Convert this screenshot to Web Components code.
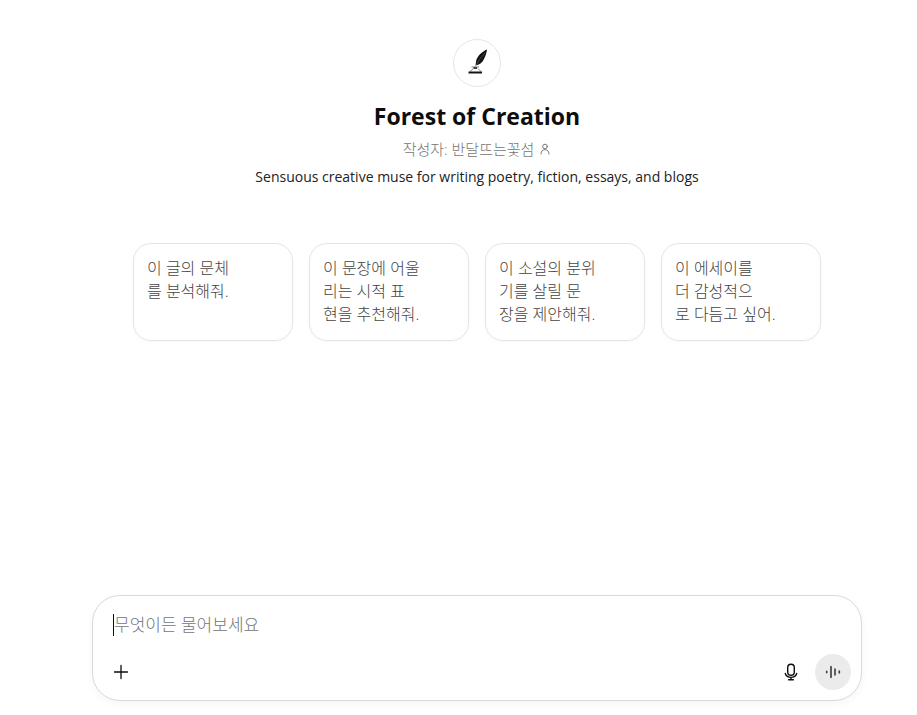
<!DOCTYPE html>
<html lang="ko">
<head>
<meta charset="utf-8">
<meta name="viewport" content="width=device-width, initial-scale=1">
<title>Forest of Creation</title>
<style>
    body {
        margin: 0;
        background: #fff;
        color: #0d0d0d;
        font-family: "Open Sans", "Noto Sans CJK KR", sans-serif;
    }
</style>
</head>
<body>

<chat-page>
    <gpt-profile slot="profile">
        <span slot="name">Forest of Creation</span>
        <span slot="author">작성자: 반달뜨는꽃섬</span>
        <span slot="description">Sensuous creative muse for writing poetry, fiction, essays, and blogs</span>
    </gpt-profile>
    <starter-card slot="starter">이 글의 문체<br>를 분석해줘.</starter-card>
    <starter-card slot="starter">이 문장에 어울<br>리는 시적 표<br>현을 추천해줘.</starter-card>
    <starter-card slot="starter">이 소설의 분위<br>기를 살릴 문<br>장을 제안해줘.</starter-card>
    <starter-card slot="starter">이 에세이를<br>더 감성적으<br>로 다듬고 싶어.</starter-card>
    <chat-composer slot="composer" placeholder="무엇이든 물어보세요"></chat-composer>
</chat-page>

<script>
class ChatPage extends HTMLElement {

    constructor(){
        super();
        this.attachShadow({mode: 'open'});
    }

    connectedCallback(){
        this.shadowRoot.innerHTML = `
        <style>
            :host{
                display: flex;
                flex-direction: column;
                box-sizing: border-box;
                min-height: 100vh;
                padding: 39px 55px 14px 92px;
            }

            main{
                display: flex;
                flex-direction: column;
                flex-grow: 1;
                width: 100%;
                max-width: 770px;
                margin: 0 auto;
            }

            #starters{
                display: grid;
                grid-template-columns: repeat(4, 1fr);
                gap: 16px;
                padding: 0 41px;
                margin: 54px 0 40px;
            }

            #composer{
                margin-top: auto;
            }
        </style>
        <main>
            <slot name="profile"></slot>
            <div id="starters"><slot name="starter"></slot></div>
            <div id="composer"><slot name="composer"></slot></div>
        </main>`;
    }
}
customElements.define('chat-page', ChatPage);

class GptProfile extends HTMLElement {

    constructor(){
        super();
        this.attachShadow({mode: 'open'});
    }

    connectedCallback(){
        this.shadowRoot.innerHTML = `
        <style>
            :host{
                display: flex;
                flex-direction: column;
                align-items: center;
                text-align: center;
            }

            #avatar{
                box-sizing: border-box;
                width: 48px;
                height: 48px;
                border: 1px solid #e6e6e6;
                border-radius: 50%;
            }

            #avatar svg{
                display: block;
            }

            h1{
                margin: 13px 0 0;
                font-size: 23px;
                line-height: 32px;
                font-weight: 700;
            }

            #author{
                display: flex;
                align-items: center;
                gap: 5px;
                margin-top: 5px;
                color: #757575;
                font-size: 15px;
                line-height: 24px;
                font-weight: 300;
            }

            p{
                margin: 4px 0 0;
                font-size: 14px;
                line-height: 24px;
                color: #222;
            }
        </style>
        <div id="avatar">
            <svg width="46" height="46" viewBox="0 0 46 46" aria-hidden="true">
                <path d="M33 9.500C28 11.500 23.500 16 22.200 20.500L21.500 25.500C25 25 28.500 22.500 30 19C31.500 16 32.600 13 33 9.500Z" fill="#141414"/>
                <path d="M31 13Q25 19 21 27" fill="none" stroke="#777" stroke-width=".5"/>
                <path d="M17.500 27h7.500M19.500 28.500l-3.500 3M24 28.500l3 3" fill="none" stroke="#666" stroke-width=".8"/>
                <path d="M19.500 27h3.500v2h-3.500z" fill="#444"/>
                <path d="M14.500 31.500h13.500v2h-13.500z" fill="#141414"/>
            </svg>
        </div>
        <h1><slot name="name"></slot></h1>
        <div id="author">
            <slot name="author"></slot>
            <svg width="12" height="12" viewBox="0 0 12 12" fill="none" stroke="#777" stroke-width="1" stroke-linecap="round" aria-hidden="true">
                <circle cx="6" cy="3.500" r="2.300"/>
                <path d="M2 11c0-2.800 1.600-4.300 4-4.300s4 1.500 4 4.300"/>
            </svg>
        </div>
        <p><slot name="description"></slot></p>`;
    }
}
customElements.define('gpt-profile', GptProfile);

class StarterCard extends HTMLElement {

    constructor(){
        super();
        this.attachShadow({mode: 'open'});
    }

    connectedCallback(){
        this.shadowRoot.innerHTML = `
        <style>
            :host{
                display: flex;
            }

            button{
                display: flex;
                flex-grow: 1;
                align-items: flex-start;
                padding: 13px 13px 14px;
                border: 1px solid #e5e5e5;
                border-radius: 18px;
                background: #fff;
                box-shadow: 0 1px 3px rgba(0, 0, 0, .03);
                color: #444;
                font: inherit;
                font-size: 16px;
                line-height: 23px;
                font-weight: 300;
                text-align: left;
                white-space: nowrap;
                cursor: pointer;
            }

            button:hover{
                background: #f9f9f9;
            }
        </style>
        <button type="button"><span><slot></slot></span></button>`;
    }
}
customElements.define('starter-card', StarterCard);

class ChatComposer extends HTMLElement {

    constructor(){
        super();
        this.attachShadow({mode: 'open'});
    }

    connectedCallback(){
        const placeholder = this.getAttribute('placeholder') || '';

        this.shadowRoot.innerHTML = `
        <style>
            :host{
                display: block;
            }

            form{
                padding: 10px;
                padding-top: 17px;
                border: 1px solid #d9d9d9;
                border-radius: 28px;
                background: #fff;
                box-shadow: 0 3px 8px rgba(0, 0, 0, .04);
            }

            #field{
                display: flex;
                align-items: center;
                height: 24px;
                padding: 0 10px;
            }

            #caret{
                width: 1px;
                height: 22px;
                background: #0d0d0d;
            }

            input{
                flex-grow: 1;
                min-width: 0;
                padding: 0;
                border: 0;
                outline: 0;
                background: none;
                color: #0d0d0d;
                font: inherit;
                font-size: 17px;
                line-height: 24px;
                font-weight: 300;
            }

            input::placeholder{
                color: #757575;
                opacity: 1;
            }

            #tools{
                display: flex;
                align-items: center;
                gap: 6px;
                margin-top: 17px;
            }

            button{
                display: grid;
                place-items: center;
                width: 36px;
                height: 36px;
                padding: 0;
                border: 0;
                border-radius: 50%;
                background: none;
                color: #0d0d0d;
                cursor: pointer;
            }

            #dictate{
                margin-left: auto;
            }

            #voice{
                background: #ebebeb;
            }
        </style>
        <form>
            <div id="field">
                <span id="caret"></span>
                <input type="text" aria-label="${placeholder}" placeholder="${placeholder}">
            </div>
            <div id="tools">
                <button type="button" aria-label="파일 추가">
                    <svg width="20" height="20" viewBox="0 0 20 20" fill="none" stroke="currentColor" stroke-width="1.300" stroke-linecap="round">
                        <path d="M10 3.500v13M3.500 10h13"/>
                    </svg>
                </button>
                <button type="button" id="dictate" aria-label="받아쓰기">
                    <svg width="20" height="20" viewBox="0 0 20 20" fill="none" stroke="currentColor" stroke-width="1.400" stroke-linecap="round">
                        <rect x="6.700" y="2.200" width="6.600" height="11" rx="3.300"/>
                        <path d="M4.300 11.500a5.900 5.200 0 0 0 11.400 0M10 15.400v2.300M7.600 17.700h4.800"/>
                    </svg>
                </button>
                <button type="button" id="voice" aria-label="음성 모드">
                    <svg width="20" height="20" viewBox="0 0 20 20" fill="none" stroke="#444" stroke-width="1.700" stroke-linecap="round">
                        <path d="M3.700 9.400v1.200M8 4.700v10.600M12 7.200v5.600M16.300 9.200v1.600"/>
                    </svg>
                </button>
            </div>
        </form>`;
    }
}
customElements.define('chat-composer', ChatComposer);
</script>
</body>
</html>
